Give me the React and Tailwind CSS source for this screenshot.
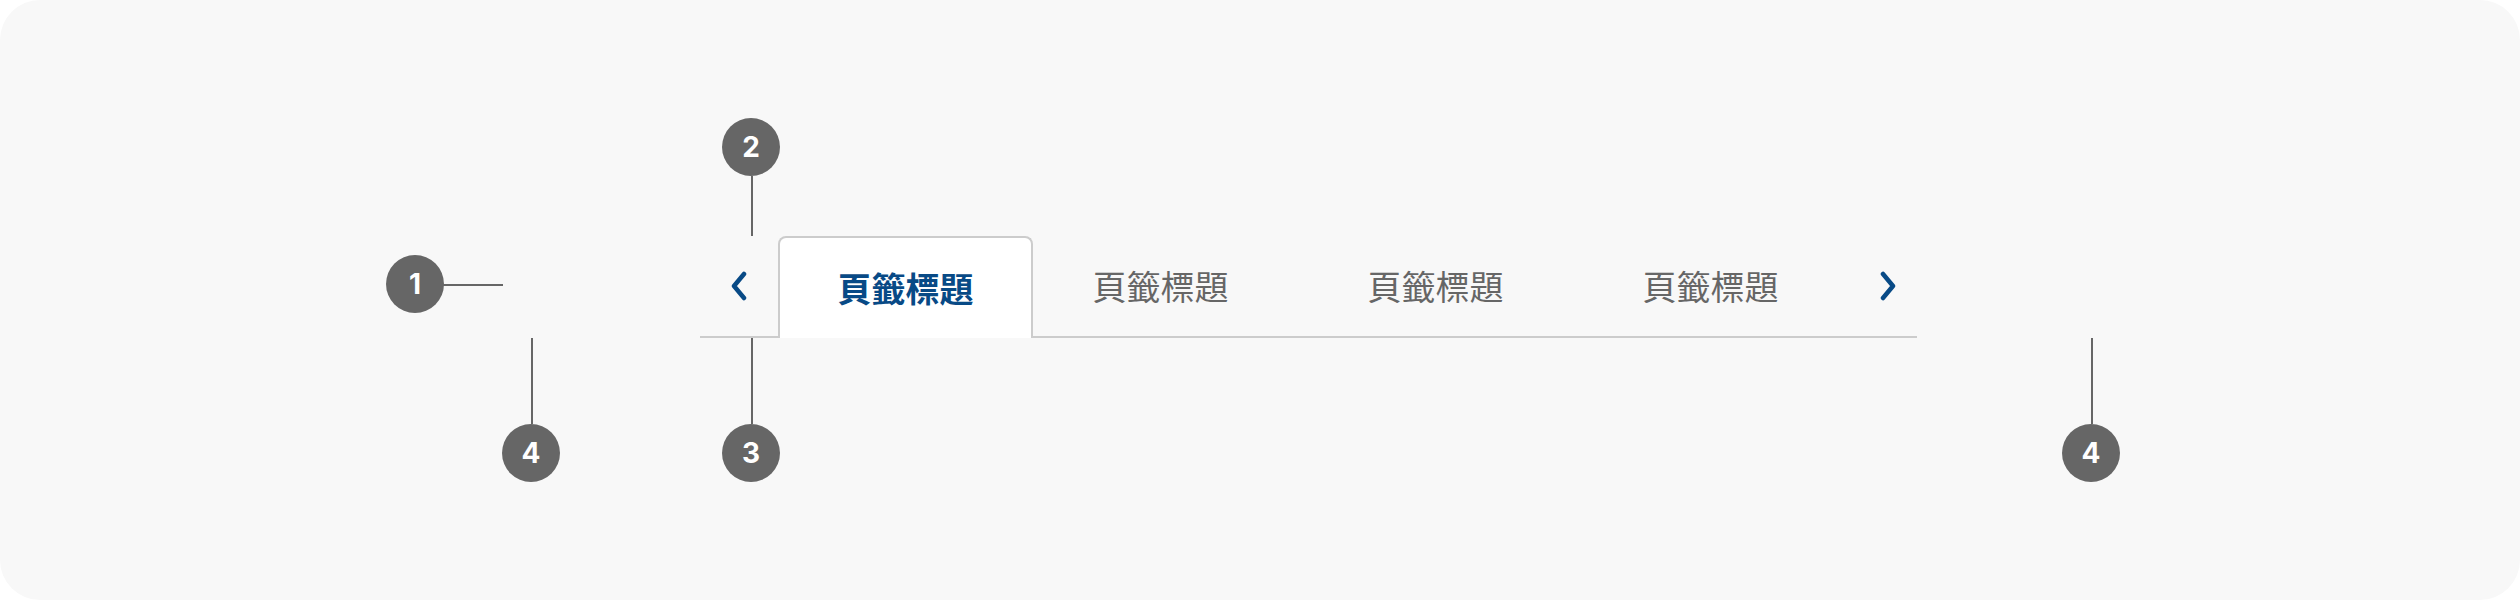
import React from "react";

const CJK = { fontFamily: '"Noto Sans CJK TC", "Noto Sans", sans-serif' };
const NUM = { fontFamily: 'Inter, "Noto Sans", sans-serif' };

function Badge({ n, className }) {
  return (
    <div
      className={`absolute w-[58px] h-[58px] rounded-full bg-[#666666] flex items-center justify-center text-white text-[28px] font-bold leading-none ${className}`}
      style={NUM}
    >
      {n}
    </div>
  );
}

function Chevron({ dir }) {
  return (
    <svg width="20" height="30" viewBox="0 0 20 30" fill="none">
      {dir === "left" ? (
        <polyline points="15,3 5,15 15,27" stroke="#084a86" strokeWidth="4.5" strokeLinecap="round" strokeLinejoin="round" />
      ) : (
        <polyline points="5,3 15,15 5,27" stroke="#084a86" strokeWidth="4.5" strokeLinecap="round" strokeLinejoin="round" />
      )}
    </svg>
  );
}

function Tab({ label, className = "" }) {
  return (
    <div
      className={`w-[255px] flex items-center justify-center text-[34px] text-[#666666] leading-none ${className}`}
      style={CJK}
    >
      {label}
    </div>
  );
}

export default function App() {
  const label = "頁籤標題";
  return (
    <div className="w-[2520px] h-[600px] bg-white">
      <div className="relative w-full h-full rounded-[40px] bg-[#f8f8f8] pt-[236px] pl-[700px]">
        <div className="flex items-stretch w-[1217px] h-[102px] border-b-2 border-[#cccccc]">
          <div className="w-[78px] flex items-center justify-center">
            <Chevron dir="left" />
          </div>
          <div
            className="w-[255px] -mb-[2px] bg-white border-2 border-b-0 border-[#cccccc] rounded-t-[8px] flex items-center justify-center text-[34px] font-bold text-[#084a86] leading-none"
            style={CJK}
          >
            {label}
          </div>
          <Tab label={label} />
          <Tab label={label} className="ml-[20px]" />
          <Tab label={label} className="ml-[20px]" />
          <div className="ml-[20px] w-[59px] flex items-center justify-center">
            <Chevron dir="right" />
          </div>
        </div>

        {/* annotations */}
        <Badge n="1" className="left-[386px] top-[255px]" />
        <div className="absolute left-[443px] top-[284px] w-[60px] h-[2px] bg-[#666666]" />

        <Badge n="2" className="left-[722px] top-[118px]" />
        <div className="absolute left-[751px] top-[176px] w-[2px] h-[60px] bg-[#666666]" />

        <Badge n="3" className="left-[722px] top-[424px]" />
        <div className="absolute left-[751px] top-[338px] w-[2px] h-[86px] bg-[#666666]" />

        <Badge n="4" className="left-[502px] top-[424px]" />
        <div className="absolute left-[531px] top-[338px] w-[2px] h-[86px] bg-[#666666]" />

        <Badge n="4" className="left-[2062px] top-[424px]" />
        <div className="absolute left-[2091px] top-[338px] w-[2px] h-[86px] bg-[#666666]" />
      </div>
    </div>
  );
}
